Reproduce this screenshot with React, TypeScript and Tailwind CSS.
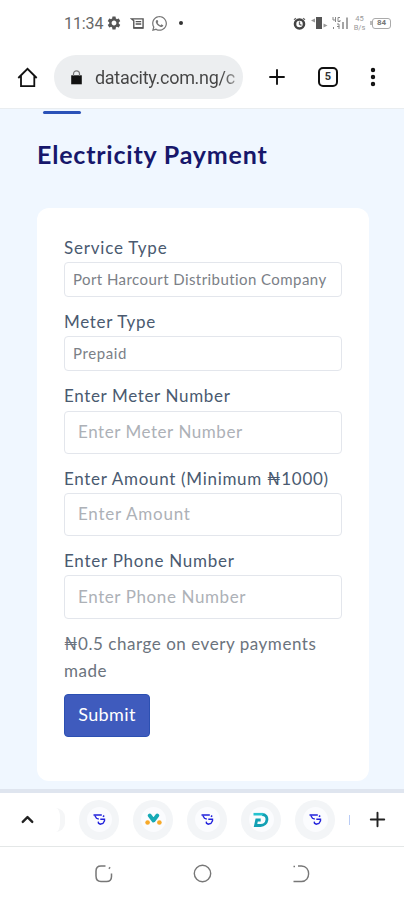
import { Plus, EllipsisVertical, ChevronUp } from 'lucide-react';
import { FaWhatsapp } from 'react-icons/fa';
import { MdSettings } from 'react-icons/md';

type Field = { label: string; text: string; labelTracking: string; textTracking: string; select?: boolean };

const fields: Field[] = [
  { label: 'Service Type', text: 'Port Harcourt Distribution Company', labelTracking: 'tracking-[0.8px]', textTracking: 'tracking-[0.43px]', select: true },
  { label: 'Meter Type', text: 'Prepaid', labelTracking: 'tracking-[0.7px]', textTracking: 'tracking-[0.6px]', select: true },
  { label: 'Enter Meter Number', text: 'Enter Meter Number', labelTracking: 'tracking-[0.65px]', textTracking: 'tracking-[0.55px]' },
  { label: 'Enter Amount (Minimum ₦1000)', text: 'Enter Amount', labelTracking: 'tracking-[0.7px]', textTracking: 'tracking-[0.75px]' },
  { label: 'Enter Phone Number', text: 'Enter Phone Number', labelTracking: 'tracking-[0.75px]', textTracking: 'tracking-[0.6px]' },
];

function StatusBar() {
  return (
    <div className="flex h-[46px] items-center pl-16 pr-[13px] text-[#666]">
      <span className="w-[40px] whitespace-nowrap pt-[2px] text-[16px] tracking-[-0.1px]">11:34</span>
      <MdSettings className="ml-[2px] h-4 w-4 text-[#555]" />
      <svg className="ml-2 h-[13px] w-[15px]" viewBox="0 0 15 14" fill="none" stroke="#555" strokeWidth="1.5">
        <path d="M1 2h12.5v10H3.5V4L1 2z" />
        <path d="M5.5 5h6M5.5 7.5h6M3.5 11.5h10" />
      </svg>
      <FaWhatsapp className="ml-[6px] h-[17px] w-[17px] text-[#777]" />
      <span className="ml-[11px] h-1 w-1 rounded-full bg-[#333]" />
      <div className="ml-auto flex items-center">
        <svg className="h-[13px] w-[13px]" viewBox="0 0 13 13" fill="none">
          <circle cx="6.5" cy="7" r="4.5" stroke="#444" strokeWidth="2.6" />
          <path d="M6.5 4.5V7.3l2 1M1 2.8l2-1.5M12 2.8l-2-1.5" stroke="#666" strokeWidth="1.3" />
        </svg>
        <svg className="ml-[5px] h-[14px] w-[17px]" viewBox="0 0 17 14">
          <path d="M5 1h6v12H5z" fill="#555" />
          <path d="M0 4.5L4 2.500v4zM12.500 7.500l4 2-4 2z" fill="#999" />
        </svg>
        <svg className="ml-[4px] h-[15px] w-[17px]" viewBox="0 0 17 15" stroke="#888" fill="none">
          <path d="M1 1v3h3M3.5 1v5M8 1.5H6v4h2V4M1.5 11v2M5 8h2v2.5h-2M7 10v3" />
          <path d="M11 6v7M15 1.5V13" strokeWidth="1.5" />
        </svg>
        <div className="ml-[3px] flex w-[15px] flex-col items-center text-[7.5px] leading-[9px] text-[#999]">
          <span>45</span>
          <span>B/s</span>
        </div>
        <div className="ml-[3px] flex items-center">
          <span className="h-1 w-[2px] bg-[#bbb]" />
          <span className="flex h-[11px] w-[19px] items-center justify-center rounded-[3px] border-[1.5px] border-[#aaa] text-[8px] font-bold leading-none text-[#777]">84</span>
        </div>
      </div>
    </div>
  );
}

function Toolbar() {
  return (
    <div className="flex h-[63px] items-center border-b border-[#e9edf0]">
      <svg className="ml-[17px] h-[21px] w-[21px]" viewBox="0 0 21 21" fill="none" stroke="#111" strokeWidth="1.8">
        <path d="M1.3 11L10.5 1.8 19.7 11M4 9v10.2h13.3V9" />
      </svg>
      <div className="ml-4 flex h-[44px] w-[189px] items-center rounded-full bg-[#eceef0] pl-4">
        <svg className="h-[15px] w-[13px] shrink-0" viewBox="0 0 12 15">
          <path d="M0.7 5.3h10.6v9H0.7z" fill="#111" />
          <path d="M3 6V3.8a3 3 0 0 1 6 0V6" fill="none" stroke="#777" strokeWidth="1.2" />
        </svg>
        <div className="ml-[12px] whitespace-nowrap bg-gradient-to-r from-[#444] from-90% to-[#999] bg-clip-text text-[18px] tracking-[-0.29px] text-transparent">datacity.com.ng/c</div>
      </div>
      <Plus className="ml-[22px] h-[24px] w-[24px] text-[#111]" strokeWidth={1.9} />
      <div className="ml-[29px] flex h-[20px] w-[20px] items-center justify-center rounded-[5px] border-2 border-[#111] text-[11px] font-bold text-[#333]">5</div>
      <EllipsisVertical className="ml-[23px] h-6 w-6 text-[#111]" strokeWidth={2.4} />
    </div>
  );
}

function FormField({ field }: { field: Field }) {
  return (
    <div className="mb-3">
      <label className={`block h-[27.2px] whitespace-nowrap text-[17px] leading-[26px] text-[#4a5a70] ${field.labelTracking}`}>{field.label}</label>
      <div
        className={`flex items-center whitespace-nowrap rounded-[4px] border border-[#e3e6ec] pb-px ${field.textTracking} ${
          field.select ? 'h-[35px] px-[8px] text-[15px] text-[#7b8087]' : 'h-[43.2px] px-[13px] text-[17px] text-[#adb1b7]'
        }`}
      >
        {field.text}
      </div>
    </div>
  );
}

function SwirlLogo() {
  return (
    <svg className="h-[13px] w-[13px]" viewBox="0 0 13 13" fill="none" stroke="#2222dc" strokeWidth="1.4">
      <path d="M0.5 2h8.3M10 2.7l1.2.9" strokeWidth="1.7" />
      <path d="M1.8 2.5l1.7 2.8 2.3.9M7.3 6.3h4.2v1.500l-1.600 2.700-2.700.7-1.700-1-.3-1.500" />
    </svg>
  );
}

function PeopleLogo() {
  return (
    <svg className="h-[13px] w-[17px]" viewBox="0 0 17 13">
      <path d="M4.7 2.5l3.8 5 3.8-5" fill="none" stroke="#16aab5" strokeWidth="3.8" strokeLinecap="round" strokeLinejoin="round" />
      <circle cx="2.6" cy="9.5" r="2.3" fill="#f7a928" />
      <circle cx="14.4" cy="9.5" r="2.3" fill="#f7a928" />
    </svg>
  );
}

function DLogo() {
  return (
    <svg className="h-4 w-4" viewBox="0 0 16 16" fill="none">
      <path d="M9 2.5c7.500 0 6 11-1.500 11H2.500l1.200-5.500h4" stroke="#12a0b4" strokeWidth="2.8" />
      <path d="M0.5 2.2h9.5" stroke="#25c3cf" strokeWidth="2.6" />
    </svg>
  );
}

const tabs = [SwirlLogo, PeopleLogo, SwirlLogo, DLogo, SwirlLogo];

function TabStrip() {
  return (
    <div className="flex h-[54px] items-center border-b border-[#e4e7e7] bg-white">
      <ChevronUp className="ml-[18px] h-[19px] w-[19px] text-[#222]" strokeWidth={3} />
      <div className="ml-[19px] h-6 w-[9px] rounded-r-full border-r-[5px] border-[#f5f6f7]" />
      <div className="ml-[14px] flex gap-[14px]">
        {tabs.map((Logo, i) => (
          <div key={i} className="flex h-10 w-10 items-center justify-center rounded-full bg-[#f3f5f7]">
            <div className="flex h-[25px] w-[25px] items-center justify-center rounded-full bg-[#fbfcfe]">
              <Logo />
            </div>
          </div>
        ))}
      </div>
      <div className="ml-[14px] h-[10px] w-px bg-[#b9ccf5]" />
      <Plus className="ml-[16px] h-[23px] w-[23px] text-[#222]" strokeWidth={2} />
    </div>
  );
}

function NavBar() {
  return (
    <div className="flex h-[53px] items-center bg-white pl-[94px]">
      <svg className="h-[20px] w-[20px]" viewBox="0 0 20 20" fill="none" stroke="#777" strokeWidth="1.5">
        <path d="M11.5 2H7Q2 2 2 7v5q0 5.500 5 5.500h5.500q5 0 5-5V9.500" />
        <path d="M15 3.5l1 1" strokeWidth="1.8" />
      </svg>
      <svg className="ml-[78px] h-[20px] w-[20px]" viewBox="0 0 20 20" fill="none" stroke="#777" strokeWidth="1.4">
        <circle cx="10.5" cy="9.5" r="8.2" />
      </svg>
      <svg className="ml-[80px] h-[20px] w-[20px]" viewBox="0 0 20 20" fill="none" stroke="#777" strokeWidth="1.4">
        <path d="M6 2h3.5c9.500 0 9.500 15.500 0 15.500H1.500M1.500 2.500h1.500" />
      </svg>
    </div>
  );
}

export default function App() {
  return (
    <div className="flex h-[900px] w-[404px] flex-col overflow-hidden bg-white font-[Roboto,sans-serif]">
      <StatusBar />
      <Toolbar />

      <main className="flex h-[684px] flex-col border-b-4 border-[#dfe5ef] bg-[#f0f7ff] px-[37px] font-[Lato,'Noto_Sans',sans-serif]">
        <div className="ml-[6px] mt-[2px] h-[3px] w-[38px] shrink-0 rounded-full bg-[#2b52b8]" />
        <h1 className="mt-[22px] h-[36px] whitespace-nowrap text-[25px] font-bold leading-[36px] tracking-[0.8px] text-[#17176b]">Electricity Payment</h1>

        {/* Payment form */}
        <div className="mt-[36px] h-[573px] w-[332px] shrink-0 rounded-[12px] bg-white px-[27px] pt-[27px]">
          {fields.map(field => (
            <FormField key={field.label} field={field} />
          ))}
          <p className="-mt-px text-[17px] leading-[27px] tracking-[0.54px] text-[#6b737d]">
            ₦0.5 charge on every payments
            <br />
            made
          </p>
          <button className="mt-[10px] block h-[43px] w-[86px] rounded-[4px] border border-[#2c50b2] bg-[#3f5bbd] pb-px text-[18px] tracking-[0.4px] text-white">Submit</button>
        </div>
      </main>

      <TabStrip />
      <NavBar />
    </div>
  );
}
